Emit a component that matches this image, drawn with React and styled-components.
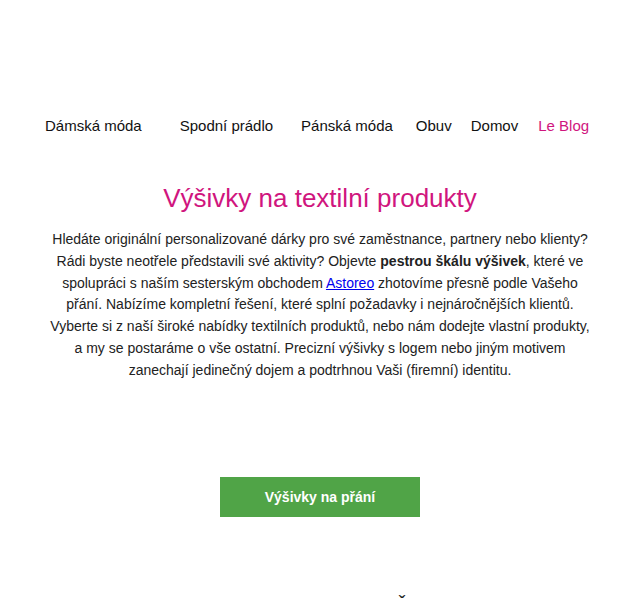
import React from 'react'
import styled, { createGlobalStyle } from 'styled-components'

const GlobalStyle = createGlobalStyle`
  html, body {
    margin: 0;
    padding: 0;
    background: #fff;
    font-family: 'Liberation Sans', Arial, sans-serif;
    color: #222;
  }
`

const Page = styled.div`
  width: 640px;
  height: 600px;
  overflow: hidden;
  display: flex;
  flex-direction: column;
  align-items: center;

  & > * {
    flex-shrink: 0;
  }
`

const Nav = styled.nav`
  display: flex;
  align-self: stretch;
  padding: 116px 0 0 45px;
  font-size: 15px;
  line-height: 20px;
`

const NavLink = styled.a`
  color: ${p => (p.$active ? '#d0157e' : '#111')};
  text-decoration: none;
  margin-right: ${p => p.$space}px;
  white-space: nowrap;
`

const Title = styled.h1`
  margin: 47px 0 0;
  font-weight: 400;
  font-size: 26px;
  line-height: 30px;
  color: #d0157e;
  text-align: center;
`

const Text = styled.p`
  margin: 16px 0 0;
  width: 545px;
  font-size: 14px;
  line-height: 21.8px;
  text-align: center;
  color: #222;

  a {
    color: #0000ee;
    text-decoration: underline;
  }
  b {
    font-weight: 700;
  }
`

const Button = styled.a`
  margin-top: 95px;
  width: 200px;
  height: 40px;
  display: flex;
  align-items: center;
  justify-content: center;
  background: #50a447;
  color: #fff;
  font-weight: 700;
  font-size: 14px;
  text-decoration: none;
`

const NextHeading = styled.div`
  margin-top: 76px;
  padding-left: 164px;
  font-size: 20px;
  line-height: 20px;
  color: #222;
`

const links = [
  { label: 'Dámská móda', space: 38 },
  { label: 'Spodní prádlo', space: 28 },
  { label: 'Pánská móda', space: 23 },
  { label: 'Obuv', space: 19 },
  { label: 'Domov', space: 20 },
  { label: 'Le Blog', space: 0, active: true },
]

export default function App() {
  return (
    <Page>
      <GlobalStyle />
      <Nav>
        {links.map(l => (
          <NavLink key={l.label} href="#" $space={l.space} $active={l.active}>
            {l.label}
          </NavLink>
        ))}
      </Nav>
      <Title>Výšivky na textilní produkty</Title>
      <Text>
        Hledáte originální personalizované dárky pro své zaměstnance, partnery nebo klienty?
        Rádi byste neotřele představili své aktivity? Objevte <b>pestrou škálu výšivek</b>, které ve
        spolupráci s naším sesterským obchodem <a href="#">Astoreo</a> zhotovíme přesně podle Vašeho
        přání. Nabízíme kompletní řešení, které splní požadavky i nejnáročnějších klientů.
        Vyberte si z naší široké nabídky textilních produktů, nebo nám dodejte vlastní produkty,
        a my se postaráme o vše ostatní. Precizní výšivky s logem nebo jiným motivem
        zanechají jedinečný dojem a podtrhnou Vaši (firemní) identitu.
      </Text>
      <Button href="#">Výšivky na přání</Button>
      <NextHeading>ˇ</NextHeading>
    </Page>
  )
}
